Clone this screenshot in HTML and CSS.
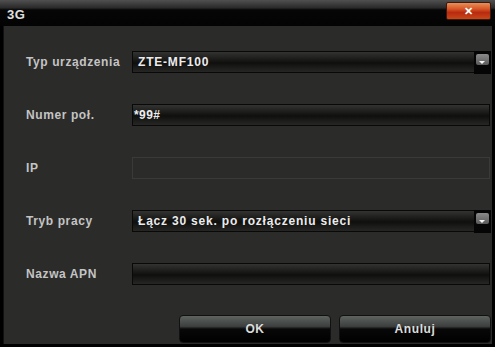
FILE: index.html
```html
<!DOCTYPE html>
<html lang="pl">
<head>
    <meta charset="UTF-8">
    <title>3G</title>
    <link rel="stylesheet" href="styles.css">
</head>
<body>
    <div class="dialog">
        <div class="titlebar">
            <span class="title">3G</span>
            <button class="close">&#x2715;</button>
        </div>
        <div class="panel">
            <div class="form">
                <div class="row">
                    <label class="lbl">Typ urządzenia</label>
                    <div class="field select">
                        <span class="val">ZTE-MF100</span>
                        <span class="arrow"><i></i></span>
                    </div>
                </div>
                <div class="row">
                    <label class="lbl">Numer poł.</label>
                    <div class="field wide"><span class="val tight">*99#</span></div>
                </div>
                <div class="row">
                    <label class="lbl">IP</label>
                    <div class="field wide off"></div>
                </div>
                <div class="row">
                    <label class="lbl">Tryb pracy</label>
                    <div class="field select">
                        <span class="val">Łącz 30 sek. po rozłączeniu sieci</span>
                        <span class="arrow"><i></i></span>
                    </div>
                </div>
                <div class="row">
                    <label class="lbl">Nazwa APN</label>
                    <div class="field wide"></div>
                </div>
            </div>
            <div class="buttons">
                <button class="btn">OK</button>
                <button class="btn">Anuluj</button>
            </div>
        </div>
    </div>
</body>
</html>
```
FILE: styles.css
```css
body { margin: 0; background: #000; font-family: "Liberation Sans", Arial, sans-serif; }
.dialog { width: 495px; height: 347px; background: #000; display: flex; flex-direction: column; }
.titlebar { height: 26px; position: relative; background: linear-gradient(#505050, #2a2a2a 30%, #060606 38%, #030303); }
.title { position: absolute; left: 7px; top: 7px; color: #e0e0e0; font-size: 13px; font-weight: bold; letter-spacing: 0.5px; }
.close { position: absolute; left: 446px; top: 2px; width: 45px; height: 18px; border: 1px solid #3a1a10; border-radius: 2px; padding: 0;
    background: linear-gradient(#e8905a, #d85a28 35%, #b82a10 60%, #c84818); color: #fff; font-size: 11px; font-weight: bold; line-height: 16px; }
.panel { flex: 1; margin: 0 3px 3px 3px; border-left: 1px solid #111; background: #2b2b2a; display: flex; flex-direction: column; }
.form { padding: 25px 0 0 22px; display: flex; flex-direction: column; gap: 31px; }
.row { display: flex; align-items: center; height: 22px; }
.lbl { width: 106px; color: #c4c4c4; font-size: 12px; font-weight: bold; letter-spacing: 0.6px; }
.field { height: 20px; border: 1px solid #090909; box-sizing: content-box; display: flex; align-items: center;
    background: linear-gradient(#333332, #1c1c1b 35%, #0f0f0e 55%, #1a1a19 75%, #262625); }
.select { width: 341px; padding-right: 16px; position: relative; }
.wide { width: 356px; }
.off { background: #2b2b2a; border-color: #3a3a39; }
.val { margin-left: 5px; color: #ececec; font-size: 12px; font-weight: bold; letter-spacing: 0.8px; white-space: nowrap; }
.tight { margin-left: 1px; letter-spacing: 0.4px; }
.arrow { position: absolute; right: -1px; top: -1px; width: 17px; height: 23px; background: #050505; }
.arrow i { position: absolute; left: 2px; top: 3px; width: 13px; height: 11px; border-radius: 2px; background: linear-gradient(#8a8a8a, #5a5a5a); }
.arrow i::after { content: ""; position: absolute; left: 3px; top: 7px; border-left: 3px solid transparent; border-right: 3px solid transparent; border-top: 3px solid #f4f4f4; }
.buttons { margin-top: auto; display: flex; justify-content: flex-end; gap: 8px; padding: 0 1px 1px 0; }
.btn { width: 152px; height: 28px; border: 1px solid #111; border-radius: 4px; padding: 0; color: #dcdcdc; font-family: "Liberation Sans", Arial, sans-serif;
    font-size: 12px; font-weight: bold; letter-spacing: 0.6px; background: linear-gradient(#5e6360, #3c3f3d 40%, #080808 50%, #000); }
```
